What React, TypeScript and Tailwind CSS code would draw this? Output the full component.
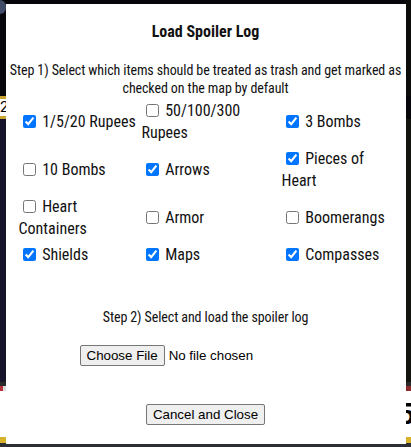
import { useState } from "react";

type Item = { label: string; checked: boolean };

const items: Item[] = [
  { label: "1/5/20 Rupees", checked: true },
  { label: "50/100/300 Rupees", checked: false },
  { label: "3 Bombs", checked: true },
  { label: "10 Bombs", checked: false },
  { label: "Arrows", checked: true },
  { label: "Pieces of Heart", checked: true },
  { label: "Heart Containers", checked: false },
  { label: "Armor", checked: false },
  { label: "Boomerangs", checked: false },
  { label: "Shields", checked: true },
  { label: "Maps", checked: true },
  { label: "Compasses", checked: true },
];

function TrashOption({ item }: { item: Item }) {
  const [checked, setChecked] = useState(item.checked);
  return (
    <label className="block text-[16px] leading-[22px] text-[#111]">
      <input
        type="checkbox"
        checked={checked}
        onChange={(e) => setChecked(e.target.checked)}
        className="m-[3px_3px_3px_4px] align-[-1px] w-[13px] h-[13px]"
      />{" "}
      {item.label}
    </label>
  );
}

// the tracker page behind the dialog, mostly hidden
function BackgroundPage() {
  return (
    <div className="flex flex-col w-full h-full bg-[#07070b]">
      <div className="h-[96px] flex justify-between">
        <div className="w-[6px] h-[14px] bg-[#5a6a90] rounded-r-full opacity-70" />
        <div className="w-[6px] h-full bg-[#0c0c0a]" />
      </div>
      <div className="h-[3px] flex">
        <div className="w-[8px] bg-[#c9a431]" />
      </div>
      <div className="h-[17px] flex">
        <div className="w-[8px] bg-white overflow-hidden text-[15px] leading-[17px] text-black font-['Roboto',sans-serif] whitespace-nowrap">
          20
        </div>
      </div>
      <div className="h-[3px] flex">
        <div className="w-[8px] bg-[#c9a431]" />
      </div>
      <div className="h-[263px] flex justify-between">
        <div className="w-[8px] bg-[#15142a]" />
        <div className="w-[6px] bg-[#14140e]" />
      </div>
      <div className="h-[4px] bg-[#2a2a2a]" />
      <div className="h-[5px] flex justify-between">
        <div className="flex">
          <div className="w-[3px] bg-[#b8323a]" />
          <div className="w-[4px] bg-[#ddd]" />
        </div>
        <div className="w-[5px] bg-[#8a2a2a]" />
      </div>
      <div className="h-[46px] bg-white flex justify-end items-center overflow-hidden">
        <span className="mr-[-4px] text-[30px] leading-[34px] font-bold text-black font-['Roboto',sans-serif]">5</span>
      </div>
      <div className="h-[6px] bg-[#d9b22c]" />
      <div className="flex-1 bg-[#2c2f33]" />
    </div>
  );
}

export default function App() {
  return (
    <div className="relative w-[411px] h-[447px] overflow-hidden">
      <BackgroundPage />

      {/* modal overlay */}
      <div className="absolute inset-0 flex items-center justify-center">
        <div className="w-[400px] h-[440px] bg-white text-center text-[#111] font-['Roboto',sans-serif] [font-stretch:75%] pt-[17px] px-[13px]">
          <h2 className="text-[16px] leading-[22px] font-bold">Load Spoiler Log</h2>
          <p className="mt-[18px] -mx-[11px] text-[14px] leading-[18px] tracking-[-0.1px]">
            Step 1) Select which items should be treated as trash and get marked as checked on the map by default
          </p>
          <div className="mt-[3px] grid grid-cols-[123px_140px_117px] items-center gap-y-[4px] text-left">
            {items.map((item) => (
              <TrashOption key={item.label} item={item} />
            ))}
          </div>
          <p className="mt-[42px] text-[14px] leading-[18px] tracking-[-0.1px]">
            Step 2) Select and load the spoiler log
          </p>
          <input
            type="file"
            className="block mx-auto mt-[19px] w-[252px] h-[21px] text-[13.333px] text-black font-['Liberation_Sans',Arial,sans-serif] [font-stretch:100%] file:h-[21px] file:px-[6px] file:border file:border-[#767676] file:bg-[#efefef] file:rounded-[2px] file:mr-[4px]"
          />
          <button className="mt-[38px] h-[21px] px-[6px] border border-[#767676] bg-[#efefef] rounded-[2px] text-[13.333px] text-black font-['Liberation_Sans',Arial,sans-serif] [font-stretch:100%]">
            Cancel and Close
          </button>
        </div>
      </div>
    </div>
  );
}
